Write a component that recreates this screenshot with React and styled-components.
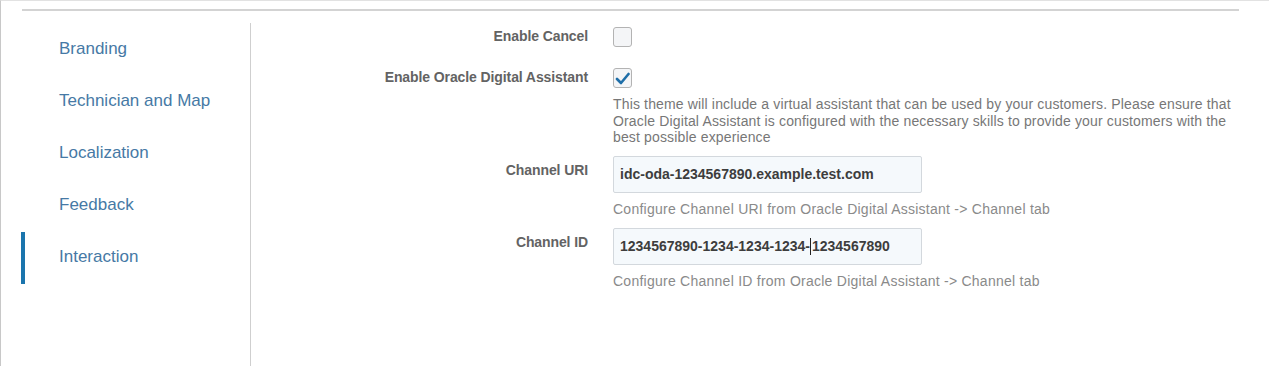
import React from "react";
import styled, { createGlobalStyle } from "styled-components";

const Global = createGlobalStyle`
  html, body { margin: 0; padding: 0; background: #fff; }
  body { font-family: "Liberation Sans", Arial, sans-serif; }
  * { box-sizing: border-box; }
`;

const Frame = styled.div`
  min-height: 366px;
  border-top: 1px solid #e2e2e2;
  border-left: 1px solid #c8c8c8;
  padding: 8px 30px 0 21px;
  display: flex;
  flex-direction: column;
`;

const Rule = styled.div`
  border-top: 2px solid #d3d3d3;
`;

const Body = styled.div`
  flex: 1;
  display: flex;
  min-height: 355px;
`;

const Sidebar = styled.nav`
  width: 229px;
  margin-top: 12px;
  border-right: 1px solid #cfcfcf;
  display: flex;
  flex-direction: column;
`;

const NavItem = styled.div`
  position: relative;
  height: 52px;
  display: flex;
  align-items: center;
  padding-left: 37px;
  padding-bottom: 1px;
  font-size: 17px;
  color: #4679a5;
  cursor: pointer;
  &::before {
    content: "";
    display: ${(p) => (p.$active ? "block" : "none")};
    position: absolute;
    left: -1px;
    top: 1px;
    width: 4px;
    height: 52px;
    background: #1b75ad;
  }
`;

const Main = styled.main`
  flex: 1;
  margin-top: 12px;
  padding-top: 4px;
`;

const Row = styled.div`
  display: grid;
  grid-template-columns: 337px 1fr;
  column-gap: 25px;
  margin-top: ${(p) => p.$gap || 0}px;
`;

const Label = styled.label`
  text-align: right;
  font-size: 14px;
  font-weight: bold;
  color: #636363;
  letter-spacing: -0.1px;
  line-height: ${(p) => p.$lh || 19}px;
  padding-top: ${(p) => p.$pt || 0}px;
`;

const Control = styled.div`
  display: flex;
  flex-direction: column;
  align-items: flex-start;
`;

const Box = styled.span`
  width: 19px;
  height: 20px;
  border: 1px solid #b3b3b3;
  border-radius: 3px;
  background: #f4f5f7;
  display: flex;
  align-items: center;
  justify-content: center;
`;

const Help = styled.p`
  margin: ${(p) => p.$mt || 8}px 0 0;
  font-size: 14px;
  letter-spacing: ${(p) => p.$ls ?? 0.25}px;
  line-height: ${(p) => p.$lh || 17}px;
  color: ${(p) => p.$color || "#8a8a8a"};
`;

const Input = styled.div`
  width: 309px;
  height: 37px;
  border: 1px solid #d3d8dd;
  border-radius: 2px;
  background: #f5f9fc;
  padding: 0 6px;
  display: flex;
  align-items: center;
  font-size: 14px;
  font-weight: bold;
  color: #3d3d3d;
`;

const Caret = styled.span`
  display: inline-block;
  width: 1px;
  height: 17px;
  background: #222;
  margin: 0 0.5px;
`;

const Check = () => (
  <svg width="15" height="13" viewBox="0 0 15 13">
    <path d="M2 7 L6 11 L13.5 2" fill="none" stroke="#1e6ea8" strokeWidth="2.6" strokeLinecap="round" strokeLinejoin="round" />
  </svg>
);

const navItems = ["Branding", "Technician and Map", "Localization", "Feedback", "Interaction"];

export default function App() {
  return (
    <>
      <Global />
      <Frame>
        <Rule />
        <Body>
          <Sidebar>
            {navItems.map((n) => (
              <NavItem key={n} $active={n === "Interaction"}>{n}</NavItem>
            ))}
          </Sidebar>
          <Main>
            <Row>
              <Label>Enable Cancel</Label>
              <Control><Box /></Control>
            </Row>
            <Row $gap={21}>
              <Label>Enable Oracle Digital Assistant</Label>
              <Control>
                <Box><Check /></Box>
                <Help $mt={8} $lh={16.5} $ls={0.15} $color="#777">
                  This theme will include a virtual assistant that can be used by your customers. Please ensure that Oracle Digital Assistant is configured with the necessary skills to provide your customers with the best possible experience
                </Help>
              </Control>
            </Row>
            <Row $gap={10}>
              <Label $pt={6} $lh={17}>Channel URI</Label>
              <Control>
                <Input>idc-oda-1234567890.example.test.com</Input>
                <Help>Configure Channel URI from Oracle Digital Assistant -&gt; Channel tab</Help>
              </Control>
            </Row>
            <Row $gap={10}>
              <Label $pt={6} $lh={17}>Channel ID</Label>
              <Control>
                <Input>1234567890-1234-1234-1234-<Caret />1234567890</Input>
                <Help>Configure Channel ID from Oracle Digital Assistant -&gt; Channel tab</Help>
              </Control>
            </Row>
          </Main>
        </Body>
      </Frame>
    </>
  );
}
